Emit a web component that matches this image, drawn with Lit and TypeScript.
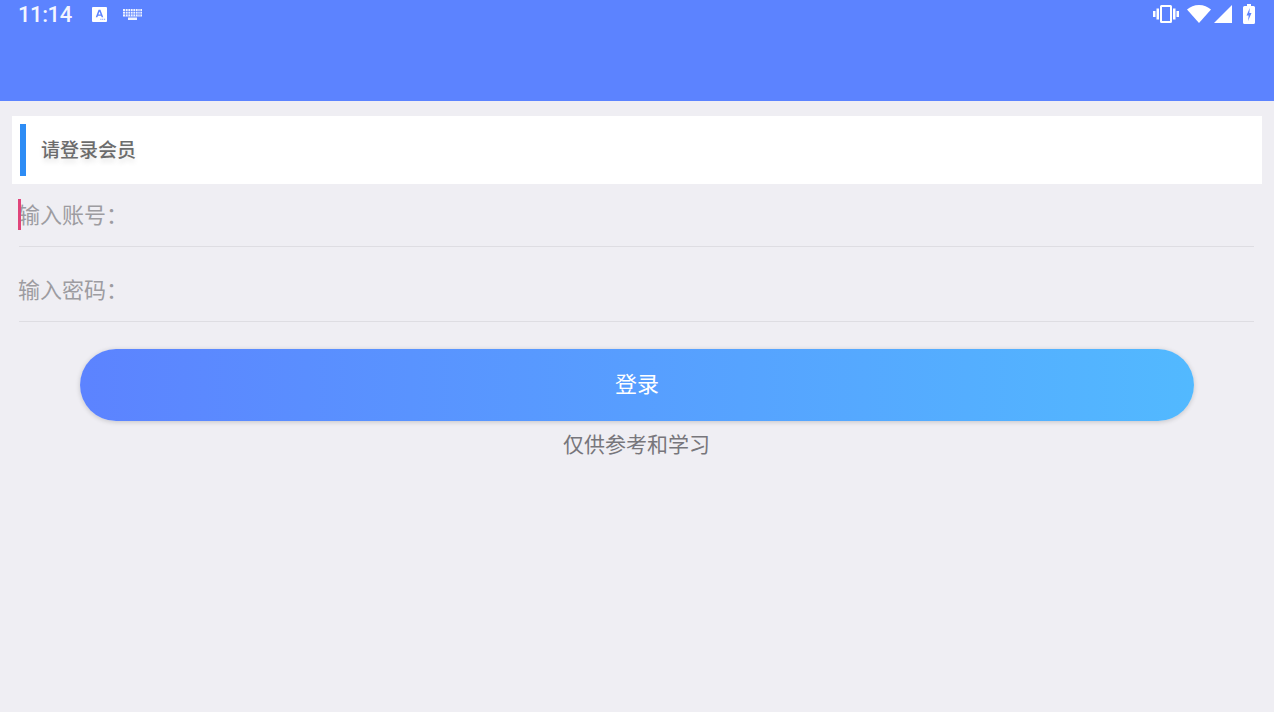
import { css, html, LitElement } from "lit";
import { customElement } from "lit/decorators.js";

@customElement("app-root")
export class AppRoot extends LitElement {
  renderStatusBar() {
    return html`
      <div class="status-bar">
        <span class="time">11:14</span>
        <svg class="icon-a" width="15" height="15" viewBox="0 0 16 16">
          <path fill="#fff" d="M1 0h14a1 1 0 0 1 1 1v14a1 1 0 0 1-1 1H1a1 1 0 0 1-1-1V1a1 1 0 0 1 1-1z" />
          <path fill="#5c83ff" d="M7 3h2l3 8h-1.700l-.6-1.700H6.300L5.700 11H4zM6.800 8h2.400L8 4.700z" />
          <path fill="#5c83ff" d="M9 12.500h1v1H9zM11 12.500h1v1h-1zM13 12.500h1v1h-1z" />
        </svg>
        <svg class="icon-kb" width="19" height="11" viewBox="0 0 19 11">
          <path fill="#fff" fill-opacity="0.9" d="M0 0h19v7.500H0zM5 8.500h9V11H5z" />
          <path
            stroke="#5c83ff"
            stroke-width="0.7"
            d="M2.500 0v7.500M5 0v7.500M7.500 0v7.500M10 0v7.500M12.500 0v7.500M15 0v7.500M17 0v7.500M0 2.500h19M0 5h19"
          />
        </svg>
        <span class="spacer"></span>
        <svg class="icon-vibrate" width="26" height="20" viewBox="0 0 26 20">
          <path
            fill="#fff"
            d="M8.500 1h9A1.500 1.500 0 0 1 19 2.500v15a1.500 1.500 0 0 1-1.500 1.500h-9A1.500 1.500 0 0 1 7 17.500v-15A1.500 1.500 0 0 1 8.500 1zM9 3v14h8V3z"
          />
          <path fill="#fff" d="M3.500 4.500h2.500v11H3.500zM20 4.500h2.500v11H20zM0 7h2.500v6H0zM23.500 7H26v6h-2.500z" />
        </svg>
        <svg class="icon-wifi" width="24" height="18" viewBox="0 0 24 18">
          <path fill="#fff" d="M12 18 0 4.500C3.200 1.800 7.300 0 12 0s8.800 1.800 12 4.500z" />
        </svg>
        <svg class="icon-signal" width="18" height="18" viewBox="0 0 18 18">
          <path fill="#fff" d="M18 0v18H0z" />
        </svg>
        <svg class="icon-battery" width="12" height="20" viewBox="0 0 12 20">
          <path
            fill="#fff"
            d="M4 0h4v2h2.500A1.500 1.500 0 0 1 12 3.500v15a1.500 1.500 0 0 1-1.500 1.500h-9A1.500 1.500 0 0 1 0 18.500v-15A1.500 1.500 0 0 1 1.500 2H4z"
          />
          <path fill="#5c83ff" d="M6.800 4 3.500 11.500h2.200L5 17l3.500-8H6.300z" />
        </svg>
      </div>
    `;
  }

  render() {
    return html`
      <header class="app-bar">${this.renderStatusBar()}</header>
      <section class="title-panel">
        <span class="title-accent"></span>
        <h1 class="title">请登录会员</h1>
      </section>
      <form class="form" @submit=${(e: Event) => e.preventDefault()}>
        <label class="field field-account">
          <span class="caret"></span>
          <input class="field-input" placeholder="输入账号：" />
        </label>
        <label class="field field-password">
          <input class="field-input" type="password" placeholder="输入密码：" />
        </label>
        <button class="submit" type="submit"><span class="submit-label">登录</span></button>
      </form>
      <p class="note">仅供参考和学习</p>
    `;
  }

  static styles = css`
    :host {
      display: block;
      height: 712px;
      overflow: hidden;
      background: #efeef3;
      font-family: "Noto Sans CJK SC", "Noto Sans", sans-serif;
    }

    .app-bar {
      height: 101px;
      background: #5c83ff;
    }

    .status-bar {
      display: flex;
      align-items: center;
      height: 28px;
      padding: 0 19px 0 18px;
      color: #f2f5ff;
    }

    .time {
      width: 74px;
      font-family: Roboto, sans-serif;
      font-size: 22px;
      font-weight: 500;
      letter-spacing: -0.4px;
    }

    .icon-a {
      margin-right: 16px;
    }

    .spacer {
      flex: 1;
    }

    .icon-vibrate {
      margin-right: 8px;
    }

    .icon-wifi {
      margin-right: 3px;
    }

    .icon-signal {
      margin-right: 11px;
    }

    .title-panel {
      display: flex;
      align-items: center;
      height: 52px;
      margin: 15px 12px 0;
      padding: 8px;
      background: #fff;
    }

    .title-accent {
      width: 6px;
      height: 52px;
      background: #2d8cf5;
    }

    .title {
      margin: 0 0 4px 15px;
      font-size: 19px;
      font-weight: 500;
      color: #6c6c6c;
      text-shadow: 0 4px 5px rgba(0, 0, 0, 0.1);
    }

    .form {
      display: flex;
      flex-direction: column;
    }

    .field {
      position: relative;
      display: block;
      margin: 0 20px 0 19px;
      border-bottom: 1px solid #dedde2;
    }

    .field-account {
      height: 62px;
    }

    .field-password {
      height: 74px;
    }

    .field-input {
      box-sizing: border-box;
      width: 100%;
      height: 100%;
      margin-left: -1px;
      padding: 0;
      border: 0;
      outline: 0;
      background: transparent;
      font: inherit;
      font-size: 22px;
    }

    .field-account .field-input {
      padding-bottom: 4px;
    }

    .field-password .field-input {
      padding-top: 8px;
    }

    .field-input::placeholder {
      color: #9d9ca1;
      opacity: 1;
    }

    .caret {
      position: absolute;
      z-index: 1;
      left: -1px;
      top: 15px;
      width: 3px;
      height: 31px;
      background: #e0457b;
    }

    .submit {
      align-self: flex-start;
      width: 1114px;
      height: 72px;
      margin: 27px 0 0 80px;
      border: 0;
      border-radius: 36px;
      background: linear-gradient(90deg, #5c83ff, #52b9ff);
      box-shadow: 0 1px 5px rgba(0, 0, 0, 0.18);
      color: #fff;
      font: inherit;
      font-size: 22px;
    }

    .submit-label {
      display: block;
      margin-top: -6px;
    }

    .note {
      margin: 6px 0 0;
      padding-right: 1px;
      text-align: center;
      font-size: 21px;
      line-height: 32px;
      color: #77767b;
    }
  `;
}

declare global {
  interface HTMLElementTagNameMap {
    "app-root": AppRoot;
  }
}
